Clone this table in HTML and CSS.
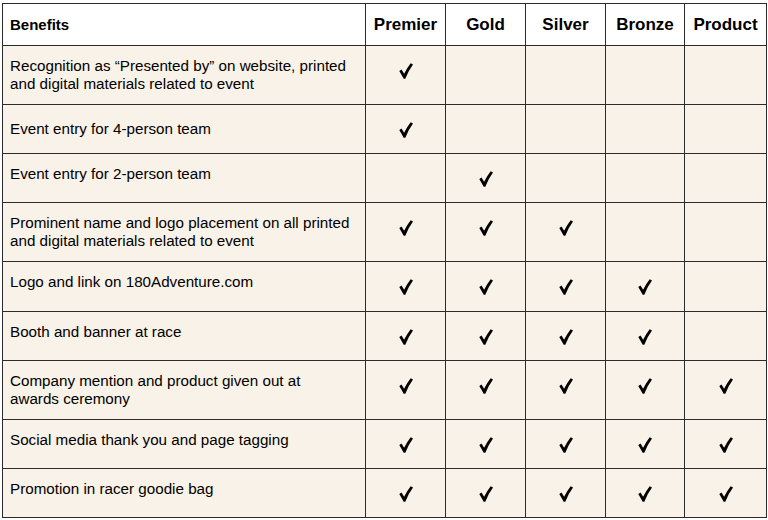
FILE: index.html
```html
<!DOCTYPE html>
<html lang="en">
<head>
<meta charset="utf-8">
<title>Sponsorship Benefits</title>
<link rel="stylesheet" href="styles.css">
</head>
<body>
<svg class="defs" width="0" height="0" aria-hidden="true">
  <defs>
    <symbol id="chk" viewBox="0 0 14 16">
      <path d="M0.3 7.9 L2.5 6.5 L5.1 10.7 Q8 5 11.7 0.3 L14 1.4 Q9.6 7.2 6.3 15.8 L4.7 15.8 Z" fill="#000"/>
    </symbol>
  </defs>
</svg>
<table class="benefits">
  <colgroup>
    <col class="c-benefit"><col class="c-tier"><col class="c-tier"><col class="c-tier"><col class="c-tier2"><col class="c-tier3">
  </colgroup>
  <thead>
    <tr class="r-head">
      <th class="h-benefit">Benefits</th>
      <th>Premier</th>
      <th>Gold</th>
      <th>Silver</th>
      <th>Bronze</th>
      <th>Product</th>
    </tr>
  </thead>
  <tbody>
    <tr class="r-tall">
      <td class="txt">Recognition as “Presented by” on website, printed and digital materials related to event</td>
      <td class="ck"><svg><use href="#chk"/></svg></td>
      <td class="ck"></td><td class="ck"></td><td class="ck"></td><td class="ck"></td>
    </tr>
    <tr class="r-short">
      <td class="txt txt-low">Event entry for 4-person team</td>
      <td class="ck"><svg><use href="#chk"/></svg></td>
      <td class="ck"></td><td class="ck"></td><td class="ck"></td><td class="ck"></td>
    </tr>
    <tr class="r-short">
      <td class="txt">Event entry for 2-person team</td>
      <td class="ck"></td>
      <td class="ck"><svg><use href="#chk"/></svg></td>
      <td class="ck"></td><td class="ck"></td><td class="ck"></td>
    </tr>
    <tr class="r-tall">
      <td class="txt">Prominent name and logo placement on all printed and digital materials related to event</td>
      <td class="ck"><svg><use href="#chk"/></svg></td>
      <td class="ck"><svg><use href="#chk"/></svg></td>
      <td class="ck"><svg><use href="#chk"/></svg></td>
      <td class="ck"></td><td class="ck"></td>
    </tr>
    <tr class="r-short">
      <td class="txt">Logo and link on 180Adventure.com</td>
      <td class="ck"><svg><use href="#chk"/></svg></td>
      <td class="ck"><svg><use href="#chk"/></svg></td>
      <td class="ck"><svg><use href="#chk"/></svg></td>
      <td class="ck"><svg><use href="#chk"/></svg></td>
      <td class="ck"></td>
    </tr>
    <tr class="r-short">
      <td class="txt">Booth and banner at race</td>
      <td class="ck"><svg><use href="#chk"/></svg></td>
      <td class="ck"><svg><use href="#chk"/></svg></td>
      <td class="ck"><svg><use href="#chk"/></svg></td>
      <td class="ck"><svg><use href="#chk"/></svg></td>
      <td class="ck"></td>
    </tr>
    <tr class="r-tall">
      <td class="txt">Company mention and product given out at<br>awards ceremony</td>
      <td class="ck"><svg><use href="#chk"/></svg></td>
      <td class="ck"><svg><use href="#chk"/></svg></td>
      <td class="ck"><svg><use href="#chk"/></svg></td>
      <td class="ck"><svg><use href="#chk"/></svg></td>
      <td class="ck"><svg><use href="#chk"/></svg></td>
    </tr>
    <tr class="r-short">
      <td class="txt">Social media thank you and page tagging</td>
      <td class="ck"><svg><use href="#chk"/></svg></td>
      <td class="ck"><svg><use href="#chk"/></svg></td>
      <td class="ck"><svg><use href="#chk"/></svg></td>
      <td class="ck"><svg><use href="#chk"/></svg></td>
      <td class="ck"><svg><use href="#chk"/></svg></td>
    </tr>
    <tr class="r-short">
      <td class="txt">Promotion in racer goodie bag</td>
      <td class="ck"><svg><use href="#chk"/></svg></td>
      <td class="ck"><svg><use href="#chk"/></svg></td>
      <td class="ck"><svg><use href="#chk"/></svg></td>
      <td class="ck"><svg><use href="#chk"/></svg></td>
      <td class="ck"><svg><use href="#chk"/></svg></td>
    </tr>
  </tbody>
</table>
</body>
</html>
```

FILE: styles.css
```css
html, body {
  margin: 0;
  padding: 0;
  background: #ffffff;
}

body {
  padding: 3px 0 0 2px;
  font-family: "Liberation Sans", Arial, sans-serif;
  color: #000;
}

.defs {
  position: absolute;
  width: 0;
  height: 0;
  overflow: hidden;
}

.benefits {
  border-collapse: collapse;
  table-layout: fixed;
  width: 764px;
}

.c-benefit { width: 363px; }
.c-tier { width: 80px; }
.c-tier2 { width: 79px; }
.c-tier3 { width: 82px; }

.benefits th,
.benefits td {
  border: 1.5px solid #2b2b2b;
  padding: 0;
}

.benefits th {
  background: #ffffff;
  font-size: 17px;
  font-weight: bold;
  text-align: center;
  vertical-align: middle;
}

.benefits th.h-benefit {
  font-size: 15px;
  text-align: left;
  padding-left: 7px;
}

.r-head { height: 42px; }
.r-tall { height: 58.7px; }
.r-short { height: 49.4px; }

.benefits td {
  background: #f9f2e8;
}

.benefits td.txt {
  font-size: 15.2px;
  line-height: 18px;
  padding: 11px 8px 0 7px;
  vertical-align: top;
}

.benefits td.txt-low {
  padding-top: 15px;
}

.benefits td.ck {
  vertical-align: top;
  padding-top: 17px;
}

.ck svg {
  display: block;
  width: 14px;
  height: 16px;
  margin: 0 auto;
}
```
